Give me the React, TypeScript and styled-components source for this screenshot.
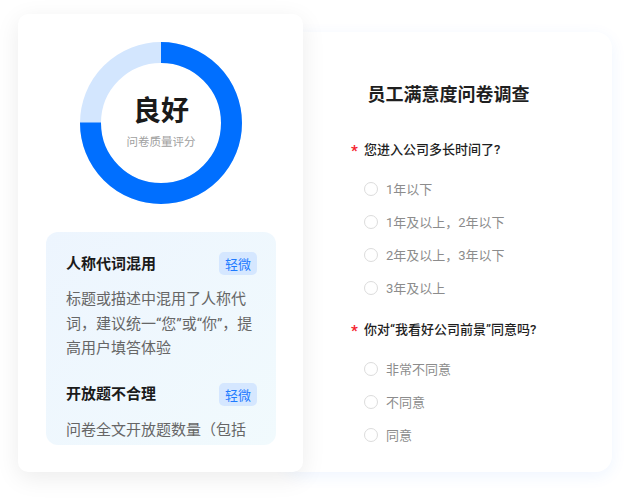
import React from 'react';
import styled, { createGlobalStyle } from 'styled-components';

const GlobalStyle = createGlobalStyle`
  html, body {
    margin: 0;
    padding: 0;
    background: #ffffff;
  }
  body {
    font-family: "Roboto", "Noto Sans CJK SC", sans-serif;
    color: #1a1a1a;
  }
`;

const Stage = styled.div`
  display: flex;
  align-items: flex-start;
  width: 630px;
  height: 500px;
  padding: 14px 0 0 18px;
  box-sizing: border-box;
  overflow: hidden;
`;

const ScoreCard = styled.div`
  position: relative;
  z-index: 2;
  display: flex;
  flex-direction: column;
  align-items: center;
  gap: 28px;
  width: 285px;
  height: 458px;
  padding: 28px 27px 28px 28px;
  box-sizing: border-box;
  border-radius: 10px;
  background: #ffffff;
  box-shadow: 0 6px 24px rgba(0, 0, 0, 0.08);
  flex-shrink: 0;
`;

const Donut = styled.div`
  position: relative;
  width: 162px;
  height: 162px;
  flex-shrink: 0;
`;

const DonutLabel = styled.div`
  position: absolute;
  inset: 0;
  display: flex;
  flex-direction: column;
  align-items: center;
  justify-content: center;
  padding-bottom: 2px;
`;

const Grade = styled.span`
  font-size: 28px;
  line-height: 34px;
  font-weight: 700;
  color: #1a1a1a;
`;

const GradeCaption = styled.span`
  margin-top: 5px;
  font-size: 11.5px;
  line-height: 16px;
  color: #a0a0a0;
`;

const IssuePanel = styled.div`
  display: flex;
  flex-direction: column;
  gap: 22px;
  width: 230px;
  height: 213px;
  padding: 20px 19px 0 20px;
  box-sizing: border-box;
  border-radius: 12px;
  background: linear-gradient(135deg, #edf5fe 0%, #f1fafd 100%);
  overflow: hidden;
  flex-shrink: 0;
`;

const Issue = styled.div`
  display: flex;
  flex-direction: column;
  gap: 12px;
`;

const IssueHead = styled.div`
  display: flex;
  align-items: center;
  justify-content: space-between;
`;

const IssueTitle = styled.span`
  font-size: 15px;
  line-height: 20px;
  font-weight: 600;
  color: #1a1a1a;
`;

const Tag = styled.span`
  display: inline-flex;
  align-items: center;
  justify-content: center;
  height: 23px;
  padding: 0 6px;
  border-radius: 5px;
  background: #d5e7ff;
  color: #1e7bff;
  font-size: 13px;
`;

const IssueText = styled.p`
  margin: 0;
  font-size: 15px;
  line-height: 24.5px;
  color: #666666;
`;

const SurveyCard = styled.div`
  position: relative;
  z-index: 1;
  display: flex;
  flex-direction: column;
  width: 327px;
  height: 440px;
  margin: 18px 0 0 -18px;
  padding: 50px 20px 0 79px;
  box-sizing: border-box;
  border-radius: 16px;
  background: #ffffff;
  box-shadow: 0 4px 16px rgba(30, 120, 255, 0.07);
  flex-shrink: 0;
`;

const SurveyTitle = styled.h1`
  margin: 0 0 30px -59px;
  font-size: 18px;
  line-height: 26px;
  font-weight: 600;
  text-align: center;
  color: #1f1f1f;
`;

const Question = styled.div`
  display: flex;
  flex-direction: column;
  margin-bottom: 14px;
`;

const QuestionTitle = styled.div`
  display: flex;
  align-items: center;
  gap: 5px;
  margin-left: -13px;
  margin-bottom: 11px;
  font-size: 13px;
  line-height: 20px;
  font-weight: 500;
  color: #1f1f1f;
`;

const Required = styled.span`
  width: 8px;
  color: #f5222d;
  font-size: 15px;
  font-weight: 700;
  line-height: 20px;
  padding-top: 3px;
`;

const Option = styled.label`
  display: flex;
  align-items: center;
  gap: 8px;
  height: 33px;
  font-size: 13px;
  color: #8c8c8c;
`;

const Radio = styled.span`
  width: 14px;
  height: 14px;
  border: 1px solid #dcdcdc;
  border-radius: 50%;
  box-sizing: border-box;
  background: #ffffff;
  flex-shrink: 0;
`;

const issues = [
  {
    title: '人称代词混用',
    level: '轻微',
    text: '标题或描述中混用了人称代词，建议统一“您”或“你”，提高用户填答体验',
  },
  {
    title: '开放题不合理',
    level: '轻微',
    text: '问卷全文开放题数量（包括填空题、简答题）偏多，建议适当减少',
  },
];

const questions = [
  {
    title: '您进入公司多长时间了?',
    options: ['1年以下', '1年及以上，2年以下', '2年及以上，3年以下', '3年及以上'],
  },
  {
    title: '你对“我看好公司前景”同意吗?',
    options: ['非常不同意', '不同意', '同意'],
  },
];

function ScoreRing({ percent }: { percent: number }) {
  const r = 70.5;
  const c = 2 * Math.PI * r;
  return (
    <svg width="162" height="162" viewBox="0 0 162 162">
      <circle cx="81" cy="81" r={r} fill="none" stroke="#d3e6fe" strokeWidth="21" />
      <circle
        cx="81"
        cy="81"
        r={r}
        fill="none"
        stroke="#006fff"
        strokeWidth="21"
        strokeDasharray={`${c * percent} ${c}`}
        transform="rotate(-90 81 81)"
      />
    </svg>
  );
}

export default function App() {
  return (
    <>
      <GlobalStyle />
      <Stage>
        <ScoreCard>
          <Donut>
            <ScoreRing percent={0.75} />
            <DonutLabel>
              <Grade>良好</Grade>
              <GradeCaption>问卷质量评分</GradeCaption>
            </DonutLabel>
          </Donut>
          <IssuePanel>
            {issues.map((issue) => (
              <Issue key={issue.title}>
                <IssueHead>
                  <IssueTitle>{issue.title}</IssueTitle>
                  <Tag>{issue.level}</Tag>
                </IssueHead>
                <IssueText>{issue.text}</IssueText>
              </Issue>
            ))}
          </IssuePanel>
        </ScoreCard>
        <SurveyCard>
          <SurveyTitle>员工满意度问卷调查</SurveyTitle>
          {questions.map((q) => (
            <Question key={q.title}>
              <QuestionTitle>
                <Required>*</Required>
                {q.title}
              </QuestionTitle>
              {q.options.map((o) => (
                <Option key={o}>
                  <Radio />
                  {o}
                </Option>
              ))}
            </Question>
          ))}
        </SurveyCard>
      </Stage>
    </>
  );
}
